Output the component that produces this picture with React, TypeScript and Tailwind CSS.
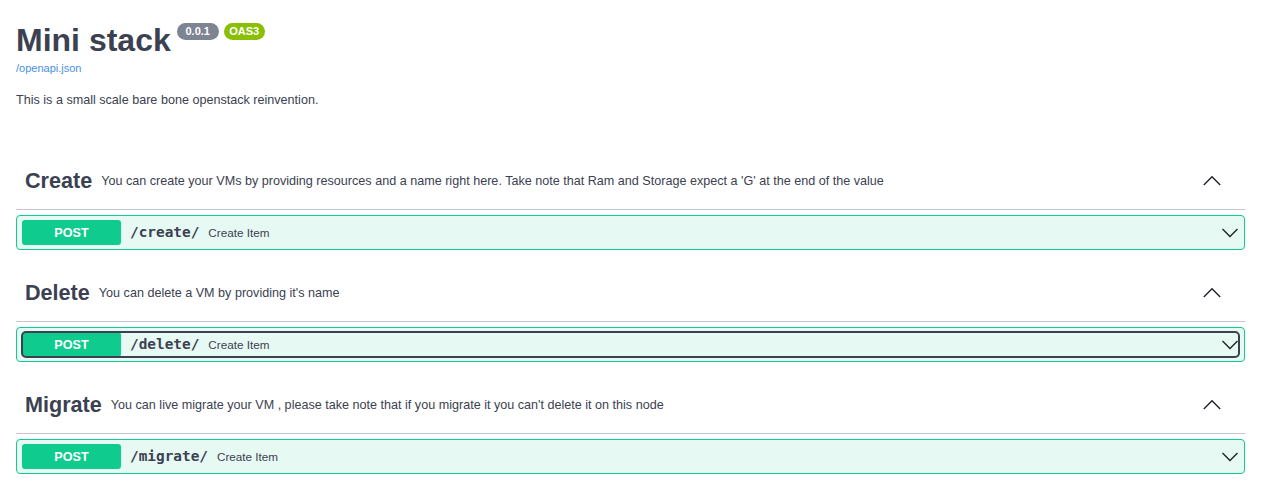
import React from 'react';

const sections = [
  {
    tag: 'Create',
    desc: "You can create your VMs by providing resources and a name right here. Take note that Ram and Storage expect a 'G' at the end of the value",
    path: '/create/',
    focused: false,
  },
  {
    tag: 'Delete',
    desc: "You can delete a VM by providing it's name",
    path: '/delete/',
    focused: true,
  },
  {
    tag: 'Migrate',
    desc: "You can live migrate your VM , please take note that if you migrate it you can't delete it on this node",
    path: '/migrate/',
    focused: false,
  },
];

function ArrowUp() {
  return (
    <svg width="18" height="18" viewBox="0 0 18 18" fill="none" className="shrink-0">
      <polyline points="0.8,13 9,4.8 17.2,13" stroke="#1f2229" strokeWidth="1.4" />
    </svg>
  );
}

function ArrowDown() {
  return (
    <svg width="18" height="18" viewBox="0 0 18 18" fill="none" className="shrink-0">
      <polyline points="1.5,5 9,12.5 16.5,5" stroke="#1f2229" strokeWidth="1.4" />
    </svg>
  );
}

function Section({ tag, desc, path, focused }: (typeof sections)[number]) {
  return (
    <div className="flex flex-col">
      {/* tag header */}
      <div className="flex h-[58px] items-center border-b border-[#c4c6cb] pl-[9px] pr-[24px]">
        <h3 className="text-[21.6px] font-bold leading-none text-[#3b4151]">{tag}</h3>
        <p className="flex-1 px-[9px] pt-[1px] text-[12.6px] leading-none text-[#3b4151]">{desc}</p>
        <ArrowUp />
      </div>

      {/* operation */}
      <div className="mt-[5px] mb-[14px] h-[35px] rounded-[4px] border border-[#10cb8e] bg-[#e7f9f3] px-[5px] py-[4px]">
        <div
          className={
            'flex h-[25px] items-center rounded-[4px] ' +
            (focused ? 'outline-2 -outline-offset-1 outline-[#3b4151]' : '')
          }
        >
          <span className="flex h-[25px] w-[99px] items-center justify-center rounded-[3px] bg-[#10cb8e] pt-[1px] text-[12.6px] font-bold text-white">
            POST
          </span>
          <span className="px-[9px] font-['DejaVu_Sans_Mono',monospace] text-[14.4px] font-bold text-[#3b4151]">
            {path}
          </span>
          <span className="flex-1 text-[11.7px] text-[#3b4151]">Create Item</span>
          <ArrowDown />
        </div>
      </div>
    </div>
  );
}

export default function App() {
  return (
    <div className="min-h-screen bg-white pl-4 pr-[18px] font-['Liberation_Sans',Arial,sans-serif] text-[#3b4151]">
      {/* info */}
      <div className="pt-[24px]">
        <div className="flex items-start">
          <h2 className="h-[32px] text-[32px] font-bold leading-[32px] text-[#3b4151]">Mini stack</h2>
          <div className="-mt-[1px] ml-[6px] flex gap-[5px]">
            <span className="h-[17px] w-[42px] rounded-full bg-[#7d8492] text-center text-[11px] font-bold leading-[17px] text-white">
              0.0.1
            </span>
            <span className="h-[17px] w-[41px] rounded-full bg-[#89bf04] text-center text-[11px] font-bold leading-[17px] text-white">
              OAS3
            </span>
          </div>
        </div>
        <a className="mt-[6px] block text-[11px] leading-[13px] text-[#4990e2]">/openapi.json</a>
        <p className="mt-[18px] text-[12.6px] leading-[15px] text-[#3b4151]">
          This is a small scale bare bone openstack reinvention.
        </p>
      </div>

      <div className="mt-[44px]">
        {sections.map((s) => (
          <Section key={s.tag} {...s} />
        ))}
      </div>
    </div>
  );
}
